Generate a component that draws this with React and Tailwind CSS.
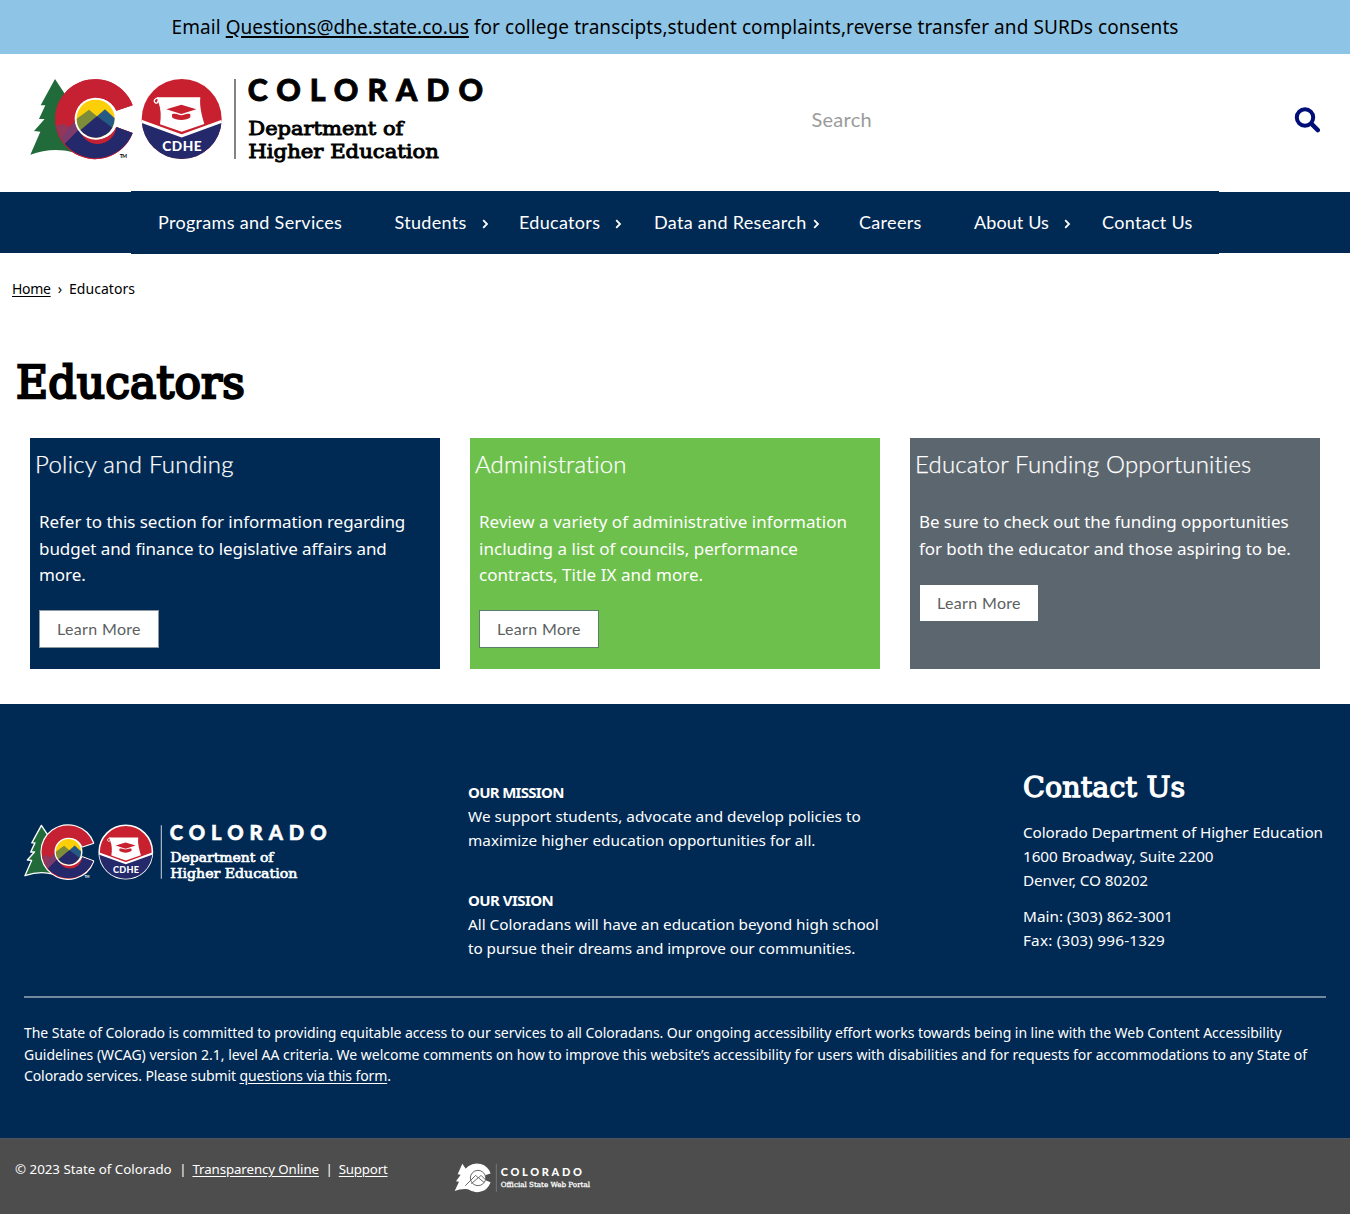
import React from "react";

const slab = "font-['DejaVu_Serif',serif]";

function StateLogo({ className, dark }) {
  const ink = dark ? "#ffffff" : "#000000";
  const edge = dark ? "#ffffff" : "none";
  return (
    <svg className={className} viewBox="0 0 1410 330" aria-label="Colorado Department of Higher Education">
      <path
        d="M105 42 L150 110 L158 262 C118 250 72 254 31 269 L61 200 L42 198 L74 162 L57 162 L76 121 L62 121 Z"
        fill="#216b3a" stroke={edge} strokeWidth="6" strokeLinejoin="round"
      />
      <path d="M338 121 A120 120 0 1 0 338 204 L289 186 A62 62 0 1 1 289 137 Z" fill="#c62033" stroke={edge} strokeWidth="10" strokeLinejoin="round" />
      <path d="M338 121 A120 120 0 1 0 338 204 L289 186 A62 62 0 1 1 289 137 Z" fill="#c62033" />
      <path d="M338 204 A120 120 0 0 1 134 236 L178 190 A56 56 0 0 0 289 186 Z" fill="#23296b" />
      <path d="M108 178 A120 120 0 0 0 134 236 L180 190 L168 166 L146 188 L132 176 L116 194 Z" fill="#7b3b6c" />
      <path d="M108 182 L132 176 L146 188 L124 222 Z" fill="#94365a" />
      <circle cx="227" cy="161" r="63" fill="#fff" />
      <circle cx="227" cy="161" r="57" fill="#fdcf08" />
      <path d="M170 161 L207 134 L231 154 L181 195 A57 57 0 0 1 170 161 Z" fill="#7c8c38" />
      <path d="M231 154 L255 133 L284 160 A57 57 0 0 1 276 190 Z" fill="#245a86" />
      <path d="M181 195 L231 153 L277 188 A57 57 0 0 1 181 195 Z" fill="#23296b" />
      <text x="299" y="278" fontFamily="Lato, sans-serif" fontSize="15" fontWeight="700" fill={ink} textLength="22">TM</text>

      <circle cx="485" cy="162" r="120" fill="#c8202f" stroke={edge} strokeWidth="7" />
      <path d="M365.2 169 L485 212 L604.8 169 A120 120 0 0 1 365.2 169 Z" fill="#23296b" />
      <path d="M365 169 L485 213 L605 169" fill="none" stroke="#fff" strokeWidth="9" />
      <path d="M410 97 L541 97 C538 124 545 150 553 177 L485 200 L420 178 C424 154 423 132 415 111 Z" fill="#fff" />
      <path d="M418 100 C405 97 398 109 407 114 C413 116 416 110 412 107" fill="none" stroke="#fff" strokeWidth="4" />
      <path d="M439 133 L484 119 L529 133 L484 147 Z" fill="#c8202f" />
      <path d="M456 148 C468 143 476 151 484 151 C492 151 500 143 511 148 L511 157 C500 168 468 168 456 157 Z" fill="#c8202f" />
      <text x="427" y="257" fontFamily="Lato, sans-serif" fontSize="41" fontWeight="900" fill="#fff" textLength="118">CDHE</text>

      <path d="M645 42 V282" stroke={dark ? "#b8c4d4" : "#6b6b6b"} strokeWidth="5" />
      <text x="683" y="108" fontFamily="Lato, sans-serif" fontSize="91" fontWeight="900" fill={ink} stroke={ink} strokeWidth="2.5" textLength="706">COLORADO</text>
      <text x="685" y="209" fontFamily="DejaVu Serif, serif" fontSize="58" fill={ink} stroke={ink} strokeWidth="2.8" textLength="465" lengthAdjust="spacingAndGlyphs">Department of</text>
      <text x="685" y="280" fontFamily="DejaVu Serif, serif" fontSize="58" fill={ink} stroke={ink} strokeWidth="2.8" textLength="572" lengthAdjust="spacingAndGlyphs">Higher Education</text>
    </svg>
  );
}

function PortalLogo({ className }) {
  return (
    <svg className={className} viewBox="0 0 510 165" aria-label="Colorado Official State Web Portal">
      <path d="M67 41 L84 66 L96 120 C76 114 58 118 44 123 L57 95 L48 94 L62 74 L53 73 Z" fill="#fff" />
      <path d="M149 69 A41 41 0 1 0 149 98 L134 92 A23 23 0 1 1 134 74 Z" fill="#fff" stroke="#fff" strokeWidth="4" />
      <circle cx="114" cy="84" r="23" fill="#fff" stroke="#6a6a6a" strokeWidth="3" />
      <path d="M76 107 L107 76 L115 84 L123 76 L136 89 M94 101 L115 83 L133 98" fill="none" stroke="#6a6a6a" strokeWidth="3" />
      <path d="M169 41 V126" stroke="#8b8b8b" strokeWidth="2" />
      <text x="182" y="78" fontFamily="Lato, sans-serif" fontSize="33" fontWeight="900" fill="#fff" textLength="244">COLORADO</text>
      <text x="182" y="112" fontFamily="DejaVu Serif, serif" fontSize="21" fill="#fff" stroke="#fff" strokeWidth="0.8" textLength="268" lengthAdjust="spacingAndGlyphs">Official State Web Portal</text>
    </svg>
  );
}

const navItems = [
  { label: "Programs and Services", box: "w-[185px] mr-[51.5px]" },
  { label: "Students", box: "w-[94.5px] mr-[30px]", arrow: true },
  { label: "Educators", box: "w-[103px] mr-[32px]", arrow: true },
  { label: "Data and Research", box: "w-[166px] mr-[39px]", arrow: true },
  { label: "Careers", box: "w-[63px] mr-[52px]" },
  { label: "About Us", box: "w-[97px] mr-[31px] tracking-[0.1px]", arrow: true },
  { label: "Contact Us", box: "w-[92px]" },
];

const cards = [
  {
    title: "Policy and Funding", titleTrack: "tracking-[0.27px]", bodyTrack: "tracking-[-0.05px]", bg: "bg-[#002a54]", btn: "mt-[21.4px] border-[#8d99a0]",
    lines: ["Refer to this section for information regarding", "budget and finance to legislative affairs and", "more."],
  },
  {
    title: "Administration", titleTrack: "tracking-[0.1px]", bodyTrack: "tracking-[0.035px]", bg: "bg-[#6dc04b]", btn: "mt-[21.4px] border-[#5b7f6a]",
    lines: ["Review a variety of administrative information", "including a list of councils, performance", "contracts, Title IX and more."],
  },
  {
    title: "Educator Funding Opportunities", titleTrack: "tracking-[0.17px]", bodyTrack: "tracking-[-0.065px]", bg: "bg-[#5c666f]", btn: "mt-[22px] border-[#5c666f]",
    lines: ["Be sure to check out the funding opportunities", "for both the educator and those aspiring to be."],
  },
];

function Card({ title, titleTrack, bodyTrack, bg, btn, lines }) {
  return (
    <div className={`h-[231px] w-[410px] ${bg} text-white`}>
      <h2 className={`pt-[9px] pl-[5px] font-['Lato',sans-serif] text-[24px] leading-[34px] font-light [-webkit-text-stroke:0.25px_white] ${titleTrack}`}>{title}</h2>
      <p className={`mt-[28px] pl-[9px] text-[17px] leading-[26.5px] whitespace-nowrap ${bodyTrack}`}>
        {lines.map((l) => <span key={l} className="block">{l}</span>)}
      </p>
      <a className={`ml-[9px] flex h-[38px] w-[120px] items-center justify-center border bg-white font-['Lato',sans-serif] text-[16px] tracking-[0.33px] text-[#5c5f62] ${btn}`}>Learn More</a>
    </div>
  );
}

export default function App() {
  return (
    <div className="h-[1214px] w-[1350px] overflow-hidden bg-white font-['Noto_Sans',sans-serif] text-black">
      <div className="flex h-[54px] items-center justify-center bg-[#8ec5e7] text-[19px] tracking-[0.08px] whitespace-nowrap">
        <p>Email <a className="tracking-[0.02px] underline decoration-2 underline-offset-[2px]">Questions@dhe.state.co.us</a> for college transcipts,student complaints,reverse transfer and SURDs consents</p>
      </div>

      <header className="flex h-[138px] items-start justify-between pt-[11px] pr-[30px] pl-[20px]">
        <StateLogo className="h-[110px] w-[470px]" />
        <form className="mt-[38px] flex w-[508.5px] items-center justify-between">
          <input placeholder="Search" className="w-[300px] font-['Lato',sans-serif] text-[20px] leading-[32px] tracking-[0.25px] outline-none placeholder:text-[#9b9b9b]" />
          <svg className="mt-[2px] h-[26px] w-[26px]" viewBox="0 0 26 26" fill="none" stroke="#000f78" aria-label="Search">
            <circle cx="11" cy="10.5" r="8.2" strokeWidth="4" />
            <path d="M17.3 16.6 L23.8 23.1" strokeWidth="4.4" strokeLinecap="round" />
          </svg>
        </form>
      </header>

      <nav className="flex h-[61px] items-center justify-center bg-[#002a54]">
        <div className="flex h-[63px] w-[1088px] shrink-0 items-center bg-[#002a54] pb-[1px] pl-[27px] font-['Lato',sans-serif] text-[18px] tracking-[0.31px] whitespace-nowrap text-white">
          {navItems.map(({ label, box, arrow }) => (
            <a key={label} className={`flex shrink-0 items-center justify-between ${box}`}>
              {label}
              {arrow && (
                <svg className="mt-[3px] h-[10px] w-[7px]" viewBox="0 0 7 10" fill="none" stroke="#fff" strokeWidth="1.8">
                  <path d="M1.2 1.2 L5 5 L1.2 8.8" />
                </svg>
              )}
            </a>
          ))}
        </div>
      </nav>

      <main className="h-[451px]">
        <div className="flex h-[72px] items-center pb-[2px] pl-[12px] text-[14px]">
          <a className="tracking-[-0.3px] underline underline-offset-2">Home</a>
          <span className="mx-[7px]">›</span>
          <span className="tracking-[0.05px]">Educators</span>
        </div>
        <h1 className={`mt-[28px] ml-[16px] text-[44px] leading-[60px] tracking-[0.2px] [-webkit-text-stroke:2.4px_black] ${slab}`}>Educators</h1>
        <div className="mt-[25px] flex gap-[30px] px-[30px]">
          {cards.map((c) => <Card key={c.title} {...c} />)}
        </div>
      </main>

      <footer className="h-[434px] bg-[#002a54] px-[24px] text-white">
        <div className="flex h-[294px] border-b-2 border-[#7389a0] text-[15.3px] leading-[24px] tracking-[0.02px] whitespace-nowrap">
          <StateLogo className="mt-[111.5px] -ml-[6px] h-[73.3px] w-[313.3px] shrink-0" dark />
          <div className="ml-[136.7px] w-[555px] pt-[76px]">
            <h3 className="text-[15px] font-bold tracking-[-0.7px]">OUR MISSION</h3>
            <p>We support students, advocate and develop policies to<br />maximize higher education opportunities for all.</p>
            <h3 className="mt-[36px] text-[15px] font-bold tracking-[-0.55px]">OUR VISION</h3>
            <p className="tracking-[-0.06px]"><span className="tracking-[-0.01px]">All Coloradans will have an education beyond high school</span><br />to pursue their dreams and improve our communities.</p>
          </div>
          <div className="pt-[64px]">
            <h2 className={`text-[28.5px] leading-[40px] tracking-[0.15px] [-webkit-text-stroke:1.3px_white] ${slab}`}>Contact Us</h2>
            <p className="mt-[12px] tracking-[-0.1px]">Colorado Department of Higher Education<br />1600 Broadway, Suite 2200<br />Denver, CO 80202</p>
            <p className="mt-[12px] tracking-[0.03px]">Main: (303) 862-3001<br /><span className="tracking-[0.2px]">Fax: (303) 996-1329</span></p>
          </div>
        </div>
        <p className="pt-[24px] text-[14px] leading-[21.5px] tracking-[-0.045px] whitespace-nowrap">
          The State of Colorado is committed to providing equitable access to our services to all Coloradans. Our ongoing accessibility effort works towards being in line with the Web Content Accessibility<br />
          <span className="tracking-[-0.018px]">Guidelines (WCAG) version 2.1, level AA criteria. We welcome comments on how to improve this website’s accessibility for users with disabilities and for requests for accommodations to any State of</span><br />
          <span className="tracking-[-0.1px]">Colorado services. Please submit <a className="underline underline-offset-2">questions via this form</a>.</span>
        </p>
      </footer>

      <div className="flex h-[76px] items-start border-t border-[#4b5560] bg-[#4d4d4d] pl-[15px] text-[13.3px] text-white">
        <p className="w-[425px] pt-[20px] leading-[20px] whitespace-nowrap">
          © 2023 State of Colorado<span className="mr-[6px] ml-[7.5px]">|</span>{" "}
          <a className="-ml-[3.5px] tracking-[-0.1px] underline underline-offset-2">Transparency Online</a>
          <span className="mr-[6px] ml-[6.5px]">|</span>
          <a className="tracking-[-0.2px] underline underline-offset-2">Support</a>
        </p>
        <PortalLogo className="mt-[11px] h-[55px] w-[170px]" />
      </div>
    </div>
  );
}
